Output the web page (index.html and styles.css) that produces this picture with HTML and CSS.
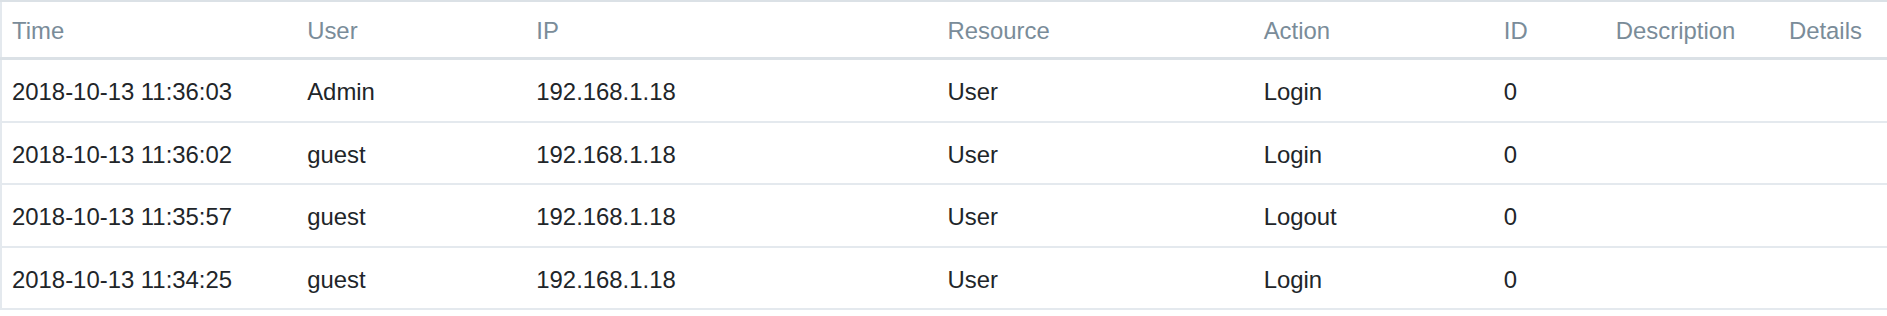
FILE: index.html
```html
<!DOCTYPE html>
<html lang="en">
<head>
    <meta charset="UTF-8">
    <meta name="viewport" content="width=device-width, initial-scale=1.0">
    <title>Audit Log</title>
    <link rel="stylesheet" href="styles.css">
</head>
<body>
    <!-- Audit log table -->
    <table class="log-table">
        <colgroup>
            <col class="col-time">
            <col class="col-user">
            <col class="col-ip">
            <col class="col-resource">
            <col class="col-action">
            <col class="col-id">
            <col class="col-desc">
            <col class="col-details">
        </colgroup>
        <thead>
            <tr>
                <th>Time</th>
                <th>User</th>
                <th>IP</th>
                <th>Resource</th>
                <th>Action</th>
                <th>ID</th>
                <th>Description</th>
                <th>Details</th>
            </tr>
        </thead>
        <tbody>
            <tr>
                <td>2018-10-13 11:36:03</td>
                <td>Admin</td>
                <td>192.168.1.18</td>
                <td>User</td>
                <td>Login</td>
                <td>0</td>
                <td></td>
                <td></td>
            </tr>
            <tr>
                <td>2018-10-13 11:36:02</td>
                <td>guest</td>
                <td>192.168.1.18</td>
                <td>User</td>
                <td>Login</td>
                <td>0</td>
                <td></td>
                <td></td>
            </tr>
            <tr>
                <td>2018-10-13 11:35:57</td>
                <td>guest</td>
                <td>192.168.1.18</td>
                <td>User</td>
                <td>Logout</td>
                <td>0</td>
                <td></td>
                <td></td>
            </tr>
            <tr>
                <td>2018-10-13 11:34:25</td>
                <td>guest</td>
                <td>192.168.1.18</td>
                <td>User</td>
                <td>Login</td>
                <td>0</td>
                <td></td>
                <td></td>
            </tr>
        </tbody>
    </table>
</body>
</html>
```

FILE: styles.css
```css
:root {
    --text-dark: #212529;
    --text-head: #7a8c99;
    --border-light: #e4e9ee;
    --border-head: #dbe1e6;
}

* {
    box-sizing: border-box;
}

body {
    margin: 0;
    background: #fff;
    font-family: "Liberation Sans", Arial, sans-serif;
    color: var(--text-dark);
}

.log-table {
    width: 1887px;
    table-layout: fixed;
    border-collapse: collapse;
    border-top: 2px solid var(--border-head);
    border-left: 2px solid var(--border-light);
    font-size: 23.9px;
    line-height: 30px;
}

.col-time { width: 296px; }
.col-user { width: 229px; }
.col-ip { width: 411px; }
.col-resource { width: 316px; }
.col-action { width: 240px; }
.col-id { width: 112px; }
.col-desc { width: 173px; }
.col-details { width: 108px; }

th {
    text-align: left;
    font-weight: 400;
    color: var(--text-head);
    padding: 14px 10px 11px;
    border-bottom: 3px solid var(--border-head);
    white-space: nowrap;
}

td {
    padding: 17px 10px 13px;
    line-height: 30.5px;
    border-bottom: 2px solid var(--border-light);
    white-space: nowrap;
}
```
